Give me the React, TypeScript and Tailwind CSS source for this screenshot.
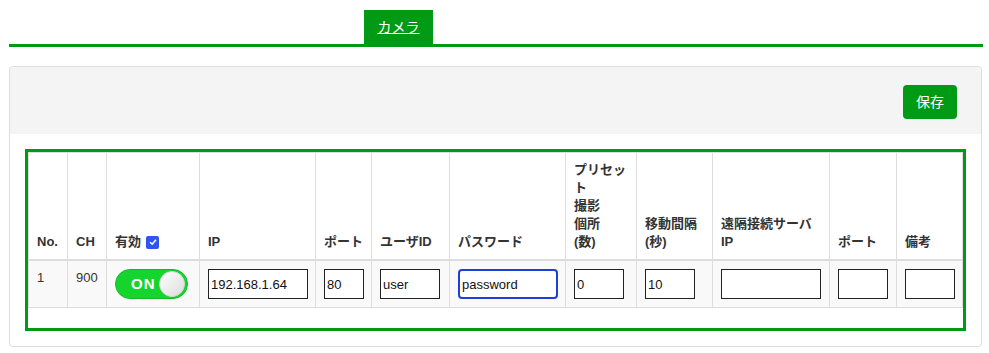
import React, { useState } from 'react';

type Cam = {
  no: number;
  ch: number;
  enabled: boolean;
  ip: string;
  port: string;
  user: string;
  password: string;
  preset: string;
  interval: string;
  remoteIp: string;
  remotePort: string;
  note: string;
};

// last column takes whatever is left
const cols: (number | undefined)[] = [39, 39, 93, 116, 56, 78, 116, 71, 76, 117, 67, undefined];

const Toggle: React.FC<{ on: boolean; onChange: () => void }> = ({ on, onChange }) => {
  return <button type="button" onClick={onChange} className="relative block h-[30px] w-[73px] rounded-full border border-[#10bd27] bg-[#14d42d]">
      <span className="absolute left-[15px] top-[5px] text-[15px] font-bold leading-[18px] tracking-[1px] text-white">
        {on ? 'ON' : 'OFF'}
      </span>
      <span className="absolute right-[2px] top-[1px] h-[26px] w-[26px] rounded-full border border-[#d8d8d8] bg-gradient-to-br from-white to-[#dcdcdc]" />
    </button>;
};

const Field: React.FC<{ value: string; width: string; focused?: boolean; onChange: (v: string) => void }> = ({
  value,
  width,
  focused = false,
  onChange
}) => {
  return <input value={value} onChange={e => onChange(e.target.value)} className={`block h-[30px] ${width} bg-white px-[2px] text-[13px] text-[#111] outline-none ${focused ? 'rounded-[4px] border-2 border-[#1f3fd4]' : 'border border-[#222]'}`} />;
};

const App: React.FC = () => {
  const [cam, setCam] = useState<Cam>({
    no: 1,
    ch: 900,
    enabled: true,
    ip: '192.168.1.64',
    port: '80',
    user: 'user',
    password: 'password',
    preset: '0',
    interval: '10',
    remoteIp: '',
    remotePort: '',
    note: ''
  });
  const set = (key: keyof Cam) => (v: string) => setCam(prev => ({
    ...prev,
    [key]: v
  }));
  const th = 'border-x border-[#ddd] border-b-2 px-2 pb-2 pt-2 text-left align-bottom font-bold';
  const td = 'border border-[#ddd] p-2 align-top';

  return <div className="min-h-[353px] bg-white font-['Liberation_Sans','Noto_Sans_CJK_JP',sans-serif] text-[13px] leading-[18px] text-[#333]">
      <div className="px-[9px] pt-[10px]">
        <div className="flex">
          <a href="#" className="ml-[355px] flex h-[34px] w-[69px] items-center justify-center bg-[#009a14] text-[14px] text-white underline">
            カメラ
          </a>
        </div>
        <div className="h-[3px] w-[974px] bg-[#009a14]" />
      </div>

      <div className="mx-[9px] mt-[19px] w-[973px] rounded-[4px] border border-[#ddd]">
        <div className="flex h-[67px] items-center justify-end rounded-t-[4px] bg-[#f4f4f4] pr-[24px] pt-[2px]">
          <button type="button" className="h-[34px] w-[54px] rounded-[4px] bg-[#009a14] text-[14px] text-white">
            保存
          </button>
        </div>
        <div className="p-[15px]">
          <div className="overflow-hidden border-[3px] border-[#009a14]">
            <table className="mb-[20px] w-full table-fixed border-collapse border border-[#ddd]">
              <colgroup>
                {cols.map((w, i) => <col key={i} style={w ? {
                width: w
              } : undefined} />)}
              </colgroup>
              <thead>
                <tr>
                  <th className={th}>No.</th>
                  <th className={th}>CH</th>
                  <th className={th}>
                    <span className="inline-flex items-center gap-[5px]">
                      有効
                      <span className="inline-flex h-[13px] w-[13px] items-center justify-center rounded-[2px] bg-[#2f55ee]">
                        <svg viewBox="0 0 12 12" className="h-[10px] w-[10px]">
                          <path d="M2.5 6.3 L5 8.6 L9.6 3.2" fill="none" stroke="white" strokeWidth="1.8" />
                        </svg>
                      </span>
                    </span>
                  </th>
                  <th className={th}>IP</th>
                  <th className={th}>ポート</th>
                  <th className={th}>ユーザID</th>
                  <th className={th}>パスワード</th>
                  <th className={th}>
                    プリセッ<br />ト<br />撮影<br />個所<br />(数)
                  </th>
                  <th className={th}>
                    移動間隔<br />(秒)
                  </th>
                  <th className={th}>
                    遠隔接続サーバ<br />IP
                  </th>
                  <th className={th}>ポート</th>
                  <th className={th}>備考</th>
                </tr>
              </thead>
              <tbody>
                <tr className="bg-[#f9f9f9]">
                  <td className={td}>{cam.no}</td>
                  <td className={td}>{cam.ch}</td>
                  <td className={td}>
                    <Toggle on={cam.enabled} onChange={() => setCam(prev => ({
                    ...prev,
                    enabled: !prev.enabled
                  }))} />
                  </td>
                  <td className={td}>
                    <Field value={cam.ip} width="w-[100px]" onChange={set('ip')} />
                  </td>
                  <td className={td}>
                    <Field value={cam.port} width="w-[40px]" onChange={set('port')} />
                  </td>
                  <td className={td}>
                    <Field value={cam.user} width="w-[60px]" onChange={set('user')} />
                  </td>
                  <td className={td}>
                    <Field value={cam.password} width="w-[100px]" focused onChange={set('password')} />
                  </td>
                  <td className={td}>
                    <Field value={cam.preset} width="w-[50px]" onChange={set('preset')} />
                  </td>
                  <td className={td}>
                    <Field value={cam.interval} width="w-[50px]" onChange={set('interval')} />
                  </td>
                  <td className={td}>
                    <Field value={cam.remoteIp} width="w-[100px]" onChange={set('remoteIp')} />
                  </td>
                  <td className={td}>
                    <Field value={cam.remotePort} width="w-[50px]" onChange={set('remotePort')} />
                  </td>
                  <td className={td}>
                    <Field value={cam.note} width="w-[50px]" onChange={set('note')} />
                  </td>
                </tr>
              </tbody>
            </table>
          </div>
        </div>
      </div>
    </div>;
};

export default App;
